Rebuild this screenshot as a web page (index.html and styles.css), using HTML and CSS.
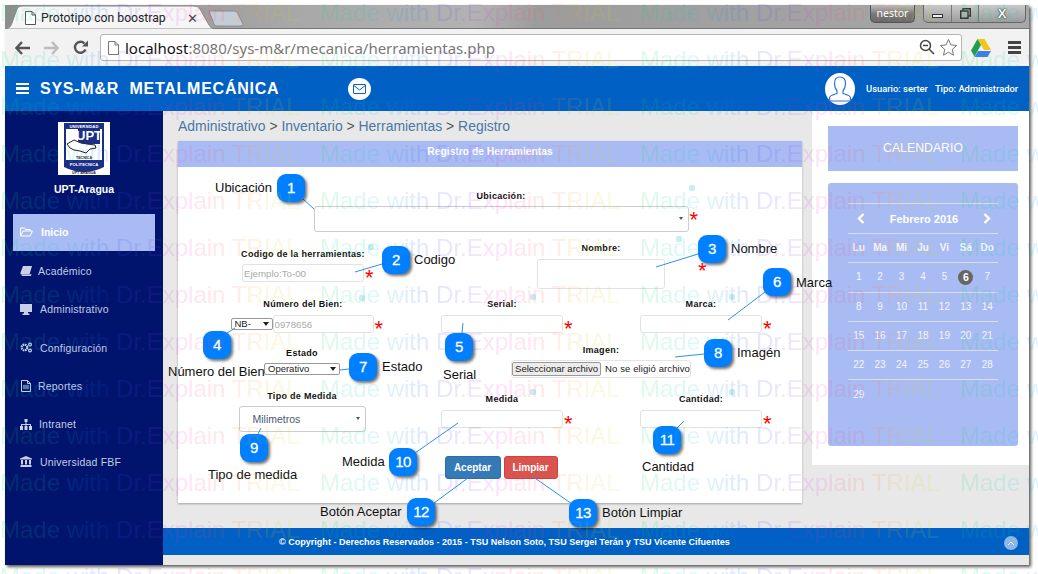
FILE: index.html
```html
<!DOCTYPE html>
<html lang="es">
<head>
<meta charset="utf-8">
<title>Prototipo con boostrap</title>
<link rel="stylesheet" href="styles.css">
</head>
<body>
<div class="window">
  <div class="tabstrip">
    <svg class="tab-shape" width="240" height="24" viewBox="0 0 240 24"><path d="M0 24 Q5 24 7 18 L12 4 Q13 1 17 1 L189 1 Q193 1 195 4 L204 20 Q206 24 210 24Z" fill="#f6f6f6" stroke="#8a8a8a"/><path d="M204 6 L229 6 Q232 6 233 9 L238 19 Q239 21 236 21 L212 21 Q210 21 209 19 Z" fill="#c6ccd6" stroke="#8c8c8c"/></svg>
    <svg class="tab-file" width="11" height="14" viewBox="0 0 11 14"><path d="M.5.5h6.5l3.5 3.500v9.500h-10zM7 .5v3.500h3.500" fill="#fff" stroke="#555"/></svg>
    <span class="tab-title">Prototipo con boostrap</span>
    <span class="tab-close">✕</span>
    <div class="winbtns">
      <span class="user-chip">nestor</span>
      <div class="caption">
        <span class="cap cap-min"><i></i></span>
        <span class="cap cap-max"><svg width="11" height="11" viewBox="0 0 11 11"><path d="M3 3V.7h7.300V8H8M.7 3h7.300v7.300H.7z" fill="none" stroke="#333" stroke-width="1.400"/></svg></span>
        <span class="cap cap-close">X</span>
      </div>
    </div>
  </div>
  <div class="toolbar">
    <svg class="nav-ico" width="15" height="14" viewBox="0 0 15 14"><path d="M7 1 1.500 7 7 13M2 7h13" fill="none" stroke="#555" stroke-width="2.400"/></svg>
    <svg class="nav-ico" width="15" height="14" viewBox="0 0 15 14"><path d="M8 1l5.500 6L8 13M13 7H0" fill="none" stroke="#bcbcbc" stroke-width="2.400"/></svg>
    <svg class="nav-ico" width="15" height="15" viewBox="0 0 15 15"><path d="M12.500 9.500A5.500 5.500 0 1 1 11.500 3.500" fill="none" stroke="#555" stroke-width="2.400"/><path d="M9 6.500h6v-6z" fill="#555"/></svg>
    <div class="omnibox">
      <svg class="omni-page" width="11" height="14" viewBox="0 0 11 14"><path d="M.5.500h6.500l3.500 3.500v9.500h-10zM7 .5v3.500h3.500" fill="#fff" stroke="#777"/></svg>
      <span class="url"><b>localhost</b>:8080/sys-m&amp;r/mecanica/herramientas.php</span>
      <svg class="omni-zoom" width="16" height="16" viewBox="0 0 16 16"><circle cx="6.500" cy="6.500" r="5" fill="none" stroke="#444" stroke-width="1.500"/><path d="M4 6.500h5M10 10l5 5" stroke="#444" stroke-width="1.500"/></svg>
      <svg class="omni-star" width="19" height="19" viewBox="0 0 19 19"><path d="M9.500 1.500l2.400 5.400 5.700.6-4.300 3.900 1.200 5.800-5-3-5 3 1.200-5.800L1.400 7.500l5.700-.6z" fill="#fff" stroke="#777"/></svg>
    </div>
    <svg class="drive" width="20" height="18" viewBox="0 0 20 18"><path d="M6.500 0h7l6.500 11h-7z" fill="#f5c518"/><path d="M6.500 0 0 11.500l3.500 6L10 6z" fill="#1f9d55"/><path d="M3.500 18 7 12h13l-3.500 6z" fill="#3f7ee8"/></svg>
    <div class="chrome-menu"><i></i><i></i><i></i></div>
  </div>
  <header class="topbar">
    <div class="burger"><i></i><i></i><i></i></div>
    <span class="brand">SYS-M&amp;R&nbsp; METALMECÁNICA</span>
    <span class="mail"><svg width="13" height="10" viewBox="0 0 13 10"><path d="M1 .5h11a.5.5 0 0 1 .5.5v8a.5.5 0 0 1-.5.5H1a.5.5 0 0 1-.5-.5V1A.5.5 0 0 1 1 .5zM.8 1.500 6.500 6l5.700-4.500" fill="none" stroke="#0a62c4"/></svg></span>
    <span class="avatar"><svg width="24" height="26" viewBox="0 0 24 26"><path d="M12 1c-4 0-5.500 3-5.500 6.500 0 3 1.200 6 2.500 7.500v2.500c-2.500 1-7 1.500-7.500 4V25h21v-3.500c-.5-2.500-5-3-7.500-4V15c1.300-1.500 2.500-4.500 2.500-7.500C17.500 4 16 1 12 1z" fill="none" stroke="#2a78c8" stroke-width="1.200"/></svg></span>
    <span class="who">Usuario: serter &nbsp;&nbsp;Tipo: Administrador</span>
  </header>
  <div class="body">
    <nav class="sidebar">
      <svg class="logo" width="52" height="53" viewBox="0 0 52 53">
        <rect width="52" height="53" fill="#fff"/>
        <path d="M6 1h40v44q-20 10-40 0z" fill="#1b2f86"/>
        <text class="logo-small" x="26" y="5.500" text-anchor="middle">UNIVERSIDAD</text>
        <path d="M8 7h36v31H8z" fill="#fff"/>
        <path d="M20 7h22v15H20z" fill="#1b2f86"/>
        <text class="logo-upt" x="31" y="18" text-anchor="middle">UPT</text>
        <path d="M9 22l7-4 7 3 6 1 8 1 1 3-6 1-4 4-6-2-6-1-4-2z" fill="#fff" stroke="#222"/>
        <text class="logo-dark" x="26" y="37" text-anchor="middle">TECNICA</text>
        <text class="logo-small" x="26" y="44" text-anchor="middle">POLITECNICA</text>
        <text class="logo-dark" x="26" y="52" text-anchor="middle">UPT ARAGUA</text>
      </svg>
      <div class="site">UPT-Aragua</div>
      <ul class="menu">
        <li class="item active"><svg width="13" height="10" viewBox="0 0 13 10"><path d="M.5 9V1h4l1 1.500h4.500V4M.5 9l2.500-5h9.500l-2.500 5z" fill="none" stroke="#fff"/></svg><span class="lb-a">Inicio</span></li>
        <li class="item"><svg width="12" height="10" viewBox="0 0 12 10"><path d="M3 0h9l-2.500 8.500H1.500Q0 8.500.5 6.500z" fill="#c9cfe6"/><path d="M1.500 8.500h8l2-.5-.5 2H2z" fill="#c9cfe6"/></svg><span class="lb-b">Académico</span></li>
        <li class="item"><svg width="12" height="11" viewBox="0 0 12 11"><path d="M0 0h12v8H0z" fill="#c9cfe6"/><path d="M4 8h4v1.500h1.500V11h-7V9.500H4z" fill="#c9cfe6"/></svg><span class="lb-a">Administrativo</span></li>
        <li class="item"><svg width="12" height="11" viewBox="0 0 12 11"><circle cx="4.500" cy="5.500" r="2.800" fill="none" stroke="#c9cfe6" stroke-width="2.200" stroke-dasharray="1.600 .6"/><circle cx="10" cy="2.500" r="1.400" fill="none" stroke="#c9cfe6" stroke-width="1.200"/><circle cx="10" cy="8.500" r="1.400" fill="none" stroke="#c9cfe6" stroke-width="1.200"/></svg><span class="lb-a">Configuración</span></li>
        <li class="item"><svg width="10" height="12" viewBox="0 0 10 12"><path d="M.5.500h6l3 3v8h-9zM2 6h6M2 8h6M6.500.5v3h3" fill="none" stroke="#c9cfe6"/></svg><span class="lb-c">Reportes</span></li>
        <li class="item"><svg width="12" height="11" viewBox="0 0 12 11"><path d="M4.500 0h3v3h-3zM0 7h3v4H0zM4.500 7h3v4h-3zM9 7h3v4H9zM5.500 3h1v2H11v2h-1V6H6.500v1h-1V6H2v1H1V5h4.500z" fill="#c9cfe6"/></svg><span class="lb-d">Intranet</span></li>
        <li class="item"><svg width="12" height="11" viewBox="0 0 12 11"><path d="M6 0l6 2.500V3.500H0V2.500zM1 4h2v4.500H1zM5 4h2v4.500H5zM9 4h2v4.500H9zM.5 9h11v2H.5z" fill="#c9cfe6"/></svg><span class="lb-a">Universidad FBF</span></li>
      </ul>
    </nav>
    <div class="right">
      <div class="workspace">
        <main class="content">
          <div class="crumbs"><a>Administrativo</a> &gt; <a>Inventario</a> &gt; <a>Herramientas</a> &gt; <a>Registro</a></div>
          <section class="panel">
            <h2 class="panel-title">Registro de Herramientas</h2>
            <form class="form">
              <div class="row r1">
                <div class="field span3"><label>Ubicación:</label><div class="ctl sel"><select class="fc w-ubic"><option></option></select><em class="star">*</em></div></div>
              </div>
              <div class="row r2">
                <div class="field pt6 nudge4"><label>Codigo de la herramientas:</label><div class="ctl"><input class="fc w-std" placeholder="Ejemplo:To-00"><em class="star">*</em></div></div>
                <div class="field span2"><label>Nombre:</label><div class="ctl gap5"><input class="fc w-nombre"><em class="star star-nombre">*</em></div></div>
              </div>
              <div class="row r3">
                <div class="field nudge4"><label>Número del Bien:</label>
                  <div class="ctl gap5 nb"><div class="sel-mini"><select class="mini w-nb"><option>NB-</option></select></div><input class="fc w-num" placeholder="0978656"><em class="star">*</em></div></div>
                <div class="field nudge2"><label>Serial:</label><div class="ctl gap5"><input class="fc w-std"><em class="star">*</em></div></div>
                <div class="field"><label>Marca:</label><div class="ctl gap5"><input class="fc w-std"><em class="star">*</em></div></div>
              </div>
              <div class="row r4">
                <div class="field pt3 nudge2"><label>Estado</label><div class="sel-mini"><select class="mini w-estado"><option>Operativo</option></select></div></div>
                <div class="field span2"><label>Imagen:</label><div class="file"><button type="button" class="file-btn">Seleccionar archivo</button><span class="file-name">No se eligió archivo</span></div></div>
              </div>
              <div class="row r5">
                <div class="field nudge2"><label>Tipo de Medida</label><div class="ctl sel"><select class="fc w-tipo"><option>Milimetros</option></select></div></div>
                <div class="field pt3 nudge2"><label>Medida</label><div class="ctl gap5"><input class="fc w-std"><em class="star">*</em></div></div>
                <div class="field pt3"><label>Cantidad:</label><div class="ctl gap5"><input class="fc w-std"><em class="star">*</em></div></div>
              </div>
              <div class="actions">
                <button type="button" class="btn btn-ok">Aceptar</button>
                <button type="button" class="btn btn-clear">Limpiar</button>
              </div>
            </form>
          </section>
        </main>
        <aside class="aside">
          <div class="cal-title">CALENDARIO</div>
          <div class="cal">
            <div class="cal-head"><svg width="8" height="11" viewBox="0 0 8 11"><path d="M6.500 1 2 5.500 6.500 10" fill="none" stroke="#fff" stroke-width="2.400"/></svg><span>Febrero 2016</span><svg width="8" height="11" viewBox="0 0 8 11"><path d="M1.500 1 6 5.500 1.500 10" fill="none" stroke="#fff" stroke-width="2.400"/></svg></div>
            <div class="week days"><span>Lu</span><span>Ma</span><span>Mi</span><span>Ju</span><span>Vi</span><span>Sá</span><span>Do</span></div>
            <div class="week"><span>1</span><span>2</span><span>3</span><span>4</span><span>5</span><span class="today"><b>6</b></span><span>7</span></div>
            <div class="week"><span>8</span><span>9</span><span>10</span><span>11</span><span>12</span><span>13</span><span>14</span></div>
            <div class="week"><span>15</span><span>16</span><span>17</span><span>18</span><span>19</span><span>20</span><span>21</span></div>
            <div class="week"><span>22</span><span>23</span><span>24</span><span>25</span><span>26</span><span>27</span><span>28</span></div>
            <div class="week"><span>29</span></div>
          </div>
        </aside>
      </div>
      <footer class="footer"><span>© Copyright - Derechos Reservados - 2015 - TSU Nelson Soto, TSU Sergei Terán y TSU Vicente Cifuentes</span>
        <span class="to-top"><svg width="8" height="5" viewBox="0 0 8 5"><path d="M1 4l3-3 3 3" fill="none" stroke="#fff"/></svg></span>
      </footer>
      <div class="foot-strip"></div>
    </div>
  </div>
</div>

<div class="canvas">
  <svg class="lines" width="1038" height="574" viewBox="0 0 1038 574">
    <g fill="#c9eeee"><rect x="368" y="244" width="6" height="6" rx="2"/><rect x="359" y="295" width="6" height="6" rx="2"/><rect x="689" y="185" width="6" height="6" rx="2"/><rect x="676" y="236" width="6" height="6" rx="2"/><rect x="530" y="294" width="6" height="6" rx="2"/><rect x="729" y="294" width="6" height="6" rx="2"/><rect x="530" y="389" width="6" height="6" rx="2"/><rect x="729" y="389" width="6" height="6" rx="2"/></g>
    <g stroke="#2e8fee" fill="none">
      <path d="M303 199 314 209"/><path d="M382 264 355 272"/><path d="M698 254 656 267"/><path d="M227 333 235 328"/><path d="M462 333 463 323"/><path d="M765 292 728 320"/><path d="M349 369 340 370"/><path d="M704 354 675 357"/><path d="M258 434 261 428"/><path d="M415 453 458 423"/><path d="M677 428 684 421"/><path d="M434 503 468 478"/><path d="M572 504 532 476"/>
    </g>
  </svg>
  <span class="badge b1">1</span><span class="note n1">Ubicación</span>
  <span class="badge b2">2</span><span class="note n2">Codigo</span>
  <span class="badge b3">3</span><span class="note n3">Nombre</span>
  <span class="badge b4">4</span><span class="note n4">Número del Bien</span>
  <span class="badge b5">5</span><span class="note n5">Serial</span>
  <span class="badge b6">6</span><span class="note n6">Marca</span>
  <span class="badge b7">7</span><span class="note n7">Estado</span>
  <span class="badge b8">8</span><span class="note n8">Imagén</span>
  <span class="badge b9">9</span><span class="note n9">Tipo de medida</span>
  <span class="badge b10">10</span><span class="note n10">Medida</span>
  <span class="badge b11">11</span><span class="note n11">Cantidad</span>
  <span class="badge b12">12</span><span class="note n12">Botón Aceptar</span>
  <span class="badge b13">13</span><span class="note n13">Botón Limpiar</span>
</div>

<svg class="watermark" width="1038" height="574" viewBox="0 0 1038 574">
  <defs>
    <linearGradient id="wm-grad" gradientUnits="userSpaceOnUse" x1="0" y1="0" x2="296" y2="0">
      <stop offset="0" stop-color="#00e050"/><stop offset=".2" stop-color="#00c8e8"/><stop offset=".36" stop-color="#1a50ff"/><stop offset=".5" stop-color="#8a30ff"/><stop offset=".62" stop-color="#ff30c8"/><stop offset=".75" stop-color="#ff5050"/><stop offset=".88" stop-color="#ffb030"/><stop offset="1" stop-color="#b0f020"/>
    </linearGradient>
    <pattern id="wm" patternUnits="userSpaceOnUse" width="320" height="47" x="0" y="0">
      <text class="wm-text" x="0" y="21" fill="url(#wm-grad)">Made with Dr.Explain TRIAL</text>
    </pattern>
  </defs>
  <rect width="1038" height="574" fill="url(#wm)"/>
</svg>
</body>
</html>
```
FILE: styles.css
```css
* { box-sizing: border-box; }
html, body { margin: 0; padding: 0; width: 1038px; height: 574px; overflow: hidden; background: #fff; font-family: "Liberation Sans", Arial, sans-serif; }
ul { list-style: none; margin: 0; padding: 0; }
h2 { margin: 0; }

.window { position: relative; width: 1024px; height: 560px; margin: 5px 0 0 5px; display: flex; flex-direction: column; box-shadow: 2px 2px 3px rgba(0,0,0,.65); }

/* browser chrome */
.tabstrip { position: relative; height: 24px; flex: none; background: linear-gradient(100deg, #8d8d8d 0, #a9a9a9 30%, #b2b2b2 46%, #9c9c9c 52%, #a8a8a8 100%); border-bottom: 1px solid #777; }
.tab-shape { position: absolute; left: 0; top: 0; }
.tab-file { position: absolute; left: 20px; top: 6px; }
.tab-title { position: absolute; left: 36px; top: 5px; font: 12.200px/17px "Roboto", sans-serif; color: #222; }
.tab-close { position: absolute; left: 182px; top: 5px; font: 13px/17px "DejaVu Sans", sans-serif; color: #444; }
.winbtns { position: absolute; right: 3px; top: 0; display: flex; gap: 8px; }
.user-chip { width: 45px; height: 18px; border: 1px solid #555; border-top: 0; border-radius: 0 0 5px 5px; background: linear-gradient(#bdbdbd, #777 55%, #6a6a6a); color: #fff; font: 10.500px/16px "Noto Sans", sans-serif; text-align: center; }
.caption { display: flex; width: 103px; height: 18px; border: 1px solid #666; border-top: 0; border-radius: 0 0 5px 5px; background: linear-gradient(#c9c9c9, #9c9c9c); }
.cap { display: flex; align-items: center; justify-content: center; border-right: 1px solid #777; height: 100%; }
.cap-min { width: 28px; }
.cap-min i { display: block; width: 11px; height: 4px; margin-top: 4px; background: #eee; border: 1px solid #333; }
.cap-max { width: 27px; }
.cap-close { flex: 1; border-right: 0; font: bold 13px/16px "Liberation Sans", sans-serif; color: #fff; text-shadow: 0 0 2px #222, 0 0 1px #222; }

.toolbar { height: 37px; flex: none; display: flex; align-items: center; padding-left: 10px; background: #f2f2f2; }
.nav-ico { margin-right: 14px; flex: none; }
.omnibox { position: relative; flex: none; width: 862px; height: 27px; margin-left: -2px; display: flex; align-items: center; background: #fff; border: 1px solid #b5b5b5; border-radius: 3px; }
.omni-page { margin-left: 7px; flex: none; }
.url { margin-left: 6px; font: 15px/20px "Noto Sans", sans-serif; color: #777; white-space: nowrap; }
.url b { font-weight: 400; color: #111; }
.omni-zoom { position: absolute; right: 26px; top: 4px; }
.omni-star { position: absolute; right: 3px; top: 3px; }
.drive { margin-left: 9px; flex: none; }
.chrome-menu { margin-left: 17px; width: 13px; display: flex; flex-direction: column; gap: 2px; }
.chrome-menu i { height: 3px; background: #444; }

/* app header */
.topbar { position: relative; height: 45px; flex: none; display: flex; align-items: center; background: #0060c4; color: #fff; }
.burger { margin-left: 11px; width: 13px; display: flex; flex-direction: column; gap: 2px; }
.burger i { height: 2.500px; background: #fff; }
.brand { margin-left: 11px; width: 308px; font: bold 16px/18px "Liberation Sans", sans-serif; letter-spacing: .75px; white-space: nowrap; }
.mail { width: 23px; height: 22px; border-radius: 50%; background: #fff; display: flex; align-items: center; justify-content: center; }
.avatar { margin-left: 454px; width: 30px; height: 32px; border-radius: 50%; background: #fff; display: flex; align-items: center; justify-content: center; }
.who { margin-left: 11px; font: 500 9.400px/12px "Roboto", sans-serif; white-space: nowrap; }

.body { flex: 1; display: flex; min-height: 0; }
.sidebar { width: 158px; flex: none; background: #00146e; padding-top: 11px; display: flex; flex-direction: column; align-items: center; }
.logo { display: block; flex: none; }
.logo-small { font: bold 4.200px "Liberation Sans", sans-serif; fill: #fff; }
.logo-dark { font: bold 3.600px "Liberation Sans", sans-serif; fill: #222; }
.logo-upt { font: bold 13px "Liberation Sans", sans-serif; fill: #fff; }
.site { margin-top: 8px; font: bold 10.500px/13px "Liberation Sans", sans-serif; color: #fff; }
.menu { margin-top: 18px; width: 142px; display: flex; flex-direction: column; }
.item { height: 38.300px; display: flex; align-items: center; padding-left: 7px; font: 10.500px/14px "Liberation Sans", sans-serif; color: #c4cbe2; letter-spacing: .2px; }
.item svg { flex: none; }
.item.active { height: 37px; margin-bottom: 1px; padding-bottom: 2px; background: #a9bbf3; color: #fff; font-weight: bold; letter-spacing: 0; }
.item:last-child { padding-bottom: 2px; }
.lb-a { margin-left: 8px; }
.lb-b { margin-left: 6px; }
.lb-c { margin-left: 7px; }
.lb-d { margin-left: 7px; }
.item:nth-child(5) svg { margin-left: 1px; }

.right { flex: 1; display: flex; flex-direction: column; min-width: 0; background: #e8e8e8; }
.workspace { height: 417px; flex: none; display: flex; }
.content { width: 649px; flex: none; padding: 7px 0 0 15px; }
.crumbs { height: 23px; font: 13.950px/16px "Liberation Sans", sans-serif; color: #555; white-space: nowrap; }
.crumbs a { color: #4a77a8; }
.panel { width: 624px; height: 362px; background: #fff; box-shadow: 0 1px 2px rgba(0,0,0,.3); }
.panel-title { height: 26px; background: #a9bbf3; color: #fff; font: bold 10.300px/22px "Liberation Sans", sans-serif; text-align: center; }

.form { padding: 23px 0 0 23px; }
.row { display: grid; grid-template-columns: repeat(3, 200px); }
.r1 { height: 52px; }
.r2 { height: 56px; }
.r3 { height: 46px; }
.r4 { height: 46px; }
.r5 { height: 66px; }
.field { display: flex; flex-direction: column; align-items: center; }
.field label { height: 12px; margin-bottom: 4px; font: bold 9px/12px "Liberation Sans", sans-serif; letter-spacing: .3px; color: #111; white-space: nowrap; }
.span3 { grid-column: 1 / span 3; }
.span2 { grid-column: 2 / span 2; }
.pt6 { padding-top: 6px; }
.pt3 { padding-top: 3px; }
.nudge2 { padding-left: 2px; }
.nudge4 { padding-left: 4px; }
.ctl { position: relative; display: flex; }
.gap5 { margin-top: 1px; }
.fc { display: block; height: 18px; padding: 0 1px; border: 1px solid #e2e2e2; border-radius: 3px; background: #fff; font: 9.700px/16px "Liberation Sans", sans-serif; color: #555; outline: 0; }
.fc::placeholder { color: #aaa; }
.w-std { width: 122px; }
.w-ubic { width: 375px; height: 26px; border-color: #ccc; appearance: none; }
.w-nombre { width: 128px; height: 30px; }
.w-num { width: 101px; }
.w-tipo { width: 127px; height: 26px; padding-left: 13px; border-color: #ccc; appearance: none; color: #4a5a70; font-size: 10.500px; }
.sel::after { content: ""; position: absolute; top: 11px; right: 6px; border: 2.500px solid transparent; border-top: 3px solid #555; border-bottom: 0; }
.star { position: absolute; left: 100%; top: 3px; margin-left: 1px; color: #f00; font: normal 22px/22px "Liberation Sans", sans-serif; }
.star-nombre { margin-left: 33px; top: 1px; }
.nb { left: -1px; }
.sel-mini { position: relative; display: flex; align-items: center; }
.sel-mini::after { content: ""; position: absolute; top: 50%; margin-top: -2px; right: 4px; border: 3px solid transparent; border-top: 4px solid #222; border-bottom: 0; }
.mini { height: 12px; padding: 0 0 0 3px; border: 1px solid #999; border-radius: 2px; background: #fff; appearance: none; font: 9.500px/10px "Liberation Sans", sans-serif; color: #222; outline: 0; }
.w-nb { width: 42px; }
.w-estado { width: 76px; }
.file { width: 180px; height: 18px; display: flex; align-items: center; border: 1px solid #e4e4e4; border-radius: 3px; }
.file-btn { width: 91px; height: 14px; padding: 0; border: 1px solid #999; border-radius: 2px; background: #ececec; font: 9.500px/12px "Liberation Sans", sans-serif; color: #222; white-space: nowrap; }
.file-name { margin-left: 4px; font: 9.500px/12px "Liberation Sans", sans-serif; color: #222; letter-spacing: .1px; white-space: nowrap; }
.actions { display: flex; justify-content: center; gap: 3px; width: 600px; }
.btn { height: 23px; padding: 0; border: 1px solid; border-radius: 3px; color: #fff; font: bold 10px/20px "Liberation Sans", sans-serif; }
.btn-ok { width: 56px; background: #337ab7; border-color: #2e6da4; }
.btn-clear { width: 54px; background: #d9534f; border-color: #d43f3a; }

.aside { flex: 1; height: 354px; background: #fff; padding: 15px 11px 0 16px; display: flex; flex-direction: column; gap: 12px; }
.cal-title { height: 45px; background: #a9bbf3; color: #fff; font: 12.300px/44px "Liberation Sans", sans-serif; text-align: center; }
.cal { height: 263px; background: #a9bbf3; border-radius: 3px; padding: 20px 20px 0; color: #fff; }
.cal-head { height: 30px; display: flex; align-items: center; justify-content: space-between; padding: 0 7px 0 9px; border-top: 1px solid #d8def0; font: bold 11px/14px "Liberation Sans", sans-serif; }
.week { height: 29.300px; display: grid; grid-template-columns: repeat(7, 1fr); align-items: center; text-align: center; border-top: 1px solid #d8def0; font: 10px/14px "Liberation Sans", sans-serif; color: #f4f6ff; }
.days { font-weight: bold; }
.today { display: flex; justify-content: center; }
.today b { width: 15px; height: 15px; border-radius: 50%; background: #666; color: #fff; font-size: 10.500px; line-height: 15px; }

.footer { position: relative; height: 27px; flex: none; display: flex; align-items: center; padding-left: 116px; background: #0060c4; color: #fff; font: bold 9.050px/12px "Liberation Sans", sans-serif; }
.to-top { position: absolute; right: 11px; top: 8px; width: 14px; height: 14px; border-radius: 50%; background: #8db7e6; display: flex; align-items: center; justify-content: center; }
.foot-strip { height: 10px; flex: none; background: #e8e8e8; }

/* Dr.Explain callouts: free canvas */
.canvas { position: absolute; left: 0; top: 0; width: 1038px; height: 574px; pointer-events: none; }
.lines { position: absolute; left: 0; top: 0; }
.badge { position: absolute; width: 28px; height: 28px; border-radius: 9px; background: #0080ff; box-shadow: 2px 2px 3px rgba(0,0,0,.55); color: #fff; font: 15px/28px "Liberation Sans", sans-serif; -webkit-text-stroke: .3px #fff; letter-spacing: -.5px; text-align: center; }
.note { position: absolute; color: #111; font: 13px/16px "Liberation Sans", sans-serif; white-space: nowrap; }
.b1 { left: 277px; top: 174px; } .n1 { left: 215px; top: 180px; }
.b2 { left: 382px; top: 246px; } .n2 { left: 414px; top: 252px; }
.b3 { left: 698px; top: 235px; } .n3 { left: 731px; top: 241px; }
.b4 { left: 203px; top: 331px; } .n4 { left: 168px; top: 364px; }
.b5 { left: 445px; top: 333px; } .n5 { left: 443px; top: 367px; }
.b6 { left: 763px; top: 268px; } .n6 { left: 796px; top: 275px; }
.b7 { left: 349px; top: 353px; } .n7 { left: 382px; top: 359px; }
.b8 { left: 704px; top: 339px; } .n8 { left: 737px; top: 345px; }
.b9 { left: 240px; top: 434px; } .n9 { left: 208px; top: 467px; }
.b10 { left: 389px; top: 448px; } .n10 { left: 342px; top: 454px; }
.b11 { left: 653px; top: 426px; } .n11 { left: 642px; top: 459px; }
.b12 { left: 407px; top: 498px; } .n12 { left: 320px; top: 504px; }
.b13 { left: 569px; top: 499px; } .n13 { left: 602px; top: 505px; }

.watermark { position: absolute; left: 0; top: 0; opacity: .125; pointer-events: none; }
.wm-text { font: 24px "Liberation Sans", sans-serif; }
```
